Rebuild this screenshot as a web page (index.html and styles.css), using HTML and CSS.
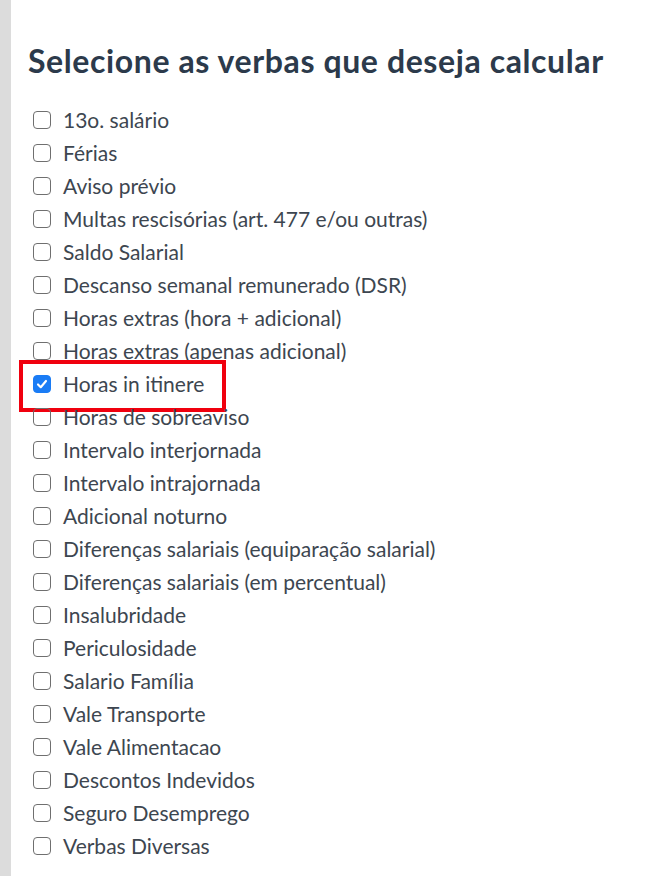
FILE: index.html
```html
<!DOCTYPE html>
<html lang="pt-BR">
<head>
<meta charset="utf-8">
<link rel="stylesheet" href="styles.css">
</head>
<body>
<div class="page">
  <h1 class="title">Selecione as verbas que deseja calcular</h1>
  <ul class="list">
    <li class="item"><span class="box"></span><span class="label">13o. salário</span></li>
    <li class="item"><span class="box"></span><span class="label">Férias</span></li>
    <li class="item"><span class="box"></span><span class="label">Aviso prévio</span></li>
    <li class="item"><span class="box"></span><span class="label">Multas rescisórias (art. 477 e/ou outras)</span></li>
    <li class="item"><span class="box"></span><span class="label">Saldo Salarial</span></li>
    <li class="item"><span class="box"></span><span class="label">Descanso semanal remunerado (DSR)</span></li>
    <li class="item"><span class="box"></span><span class="label">Horas extras (hora + adicional)</span></li>
    <li class="item"><span class="box"></span><span class="label">Horas extras (apenas adicional)</span></li>
    <li class="item highlight"><span class="box checked"><svg viewBox="0 0 18 18" width="18" height="18"><path d="M4.5 9.5 L7.6 12.6 L13.5 5.6" fill="none" stroke="#fff" stroke-width="2.4" stroke-linecap="round" stroke-linejoin="round"/></svg></span><span class="label">Horas in itinere</span><span class="mark"></span></li>
    <li class="item"><span class="box"></span><span class="label">Horas de sobreaviso</span></li>
    <li class="item"><span class="box"></span><span class="label">Intervalo interjornada</span></li>
    <li class="item"><span class="box"></span><span class="label">Intervalo intrajornada</span></li>
    <li class="item"><span class="box"></span><span class="label">Adicional noturno</span></li>
    <li class="item"><span class="box"></span><span class="label">Diferenças salariais (equiparação salarial)</span></li>
    <li class="item"><span class="box"></span><span class="label">Diferenças salariais (em percentual)</span></li>
    <li class="item"><span class="box"></span><span class="label">Insalubridade</span></li>
    <li class="item"><span class="box"></span><span class="label">Periculosidade</span></li>
    <li class="item"><span class="box"></span><span class="label">Salario Família</span></li>
    <li class="item"><span class="box"></span><span class="label">Vale Transporte</span></li>
    <li class="item"><span class="box"></span><span class="label">Vale Alimentacao</span></li>
    <li class="item"><span class="box"></span><span class="label">Descontos Indevidos</span></li>
    <li class="item"><span class="box"></span><span class="label">Seguro Desemprego</span></li>
    <li class="item"><span class="box"></span><span class="label">Verbas Diversas</span></li>
  </ul>
</div>
</body>
</html>
```

FILE: styles.css
```css
html, body {
  margin: 0;
  padding: 0;
  background: #ffffff;
}
body {
  font-family: Lato, "Noto Sans", sans-serif;
  width: 664px;
  height: 876px;
  overflow: hidden;
}
.page {
  border-left: 11px solid #dcdcdc;
  min-height: 876px;
  box-sizing: border-box;
  padding: 40px 0 0 17px;
}
.title {
  margin: 0 0 21px 0;
  font-size: 32px;
  font-weight: 700;
  color: #2c3a4b;
  line-height: 42px;
  letter-spacing: 0.6px;
}
.list {
  list-style: none;
  margin: 0;
  padding: 0 0 0 5px;
}
.item {
  position: relative;
  display: flex;
  align-items: center;
  height: 33px;
}
.box {
  width: 18px;
  height: 18px;
  border: 1.5px solid #6f6f6f;
  border-radius: 4px;
  box-sizing: border-box;
  flex: none;
  margin-right: 12px;
  display: flex;
  align-items: center;
  justify-content: center;
}
.box.checked {
  background: #1a7cf5;
  border-color: #1a7cf5;
}
.box.checked svg {
  width: 18px;
  height: 18px;
}
.label {
  font-size: 21px;
  color: #3d4650;
}
.mark {
  position: absolute;
  left: -14px;
  top: -7px;
  width: 207px;
  height: 52px;
  border: 4px solid #f0000e;
  box-sizing: border-box;
  pointer-events: none;
}
```
